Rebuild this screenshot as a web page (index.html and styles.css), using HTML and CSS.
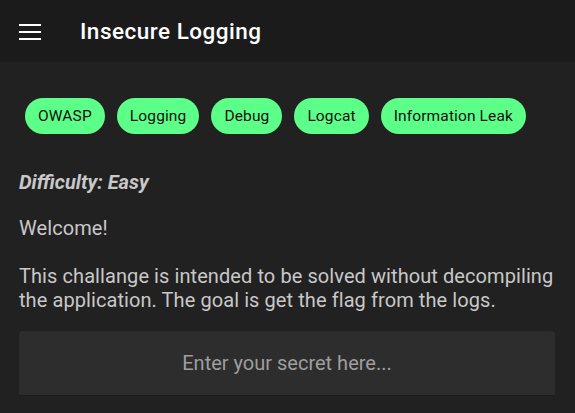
FILE: index.html
```html
<!DOCTYPE html>
<html>
<head>
<meta charset="utf-8">
<link rel="stylesheet" href="styles.css">
</head>
<body>
<header class="appbar">
  <svg class="menu" width="22" height="16" viewBox="0 0 22 16"><rect x="0" y="0" width="22" height="2" fill="#fff"/><rect x="0" y="7" width="22" height="2" fill="#fff"/><rect x="0" y="14" width="22" height="2" fill="#fff"/></svg>
  <h1 class="title">Insecure Logging</h1>
</header>
<main class="content">
  <div class="chips">
    <span class="chip">OWASP</span>
    <span class="chip">Logging</span>
    <span class="chip">Debug</span>
    <span class="chip">Logcat</span>
    <span class="chip">Information Leak</span>
  </div>
  <p class="difficulty">Difficulty: Easy</p>
  <p class="text">Welcome!</p>
  <p class="text text-long">This challange is intended to be solved without decompiling the application. The goal is get the flag from the logs.</p>
  <div class="input">Enter your secret here...</div>
</main>
</body>
</html>
```
FILE: styles.css
```css
html, body { margin: 0; padding: 0; }
body {
  background: #212121;
  font-family: Roboto, "Noto Sans", sans-serif;
  width: 575px;
  height: 413px;
  overflow: hidden;
}
.appbar {
  height: 62px;
  background: #1b1b1b;
  display: flex;
  align-items: center;
  padding-left: 19px;
  box-sizing: border-box;
}
.menu { display: block; margin-top: 1px; }
.title {
  margin: 0 0 0 39px;
  color: #fff;
  font-size: 22.5px;
  font-weight: 500;
  letter-spacing: 0.5px;
  line-height: 28px;
}
.content { padding: 36px 20px 0 19px; }
.chips { display: flex; gap: 12px; padding-left: 6px; }
.chip {
  background: #5cff88;
  color: #111;
  font-size: 15.5px;
  letter-spacing: 0.13px;
  height: 36px;
  line-height: 36px;
  padding: 0 13px;
  border-radius: 18px;
}
.difficulty {
  margin: 36px 0 0;
  color: #c8c8c8;
  font-size: 20px;
  font-weight: 700;
  font-style: italic;
  line-height: 24px;
}
.text {
  margin: 22px 0 0;
  color: #c8c8c8;
  font-size: 20px;
  letter-spacing: 0.08px;
  line-height: 24px;
}
.text-long { margin-top: 24px; }
.input {
  margin-top: 19px;
  width: 536px;
  height: 65px;
  background: #2d2d2d;
  border-radius: 4px 4px 0 0;
  border-bottom: 1px solid #1c1c1c;
  box-sizing: border-box;
  display: flex;
  align-items: center;
  justify-content: center;
  color: #9e9e9e;
  font-size: 20px;
}
```
